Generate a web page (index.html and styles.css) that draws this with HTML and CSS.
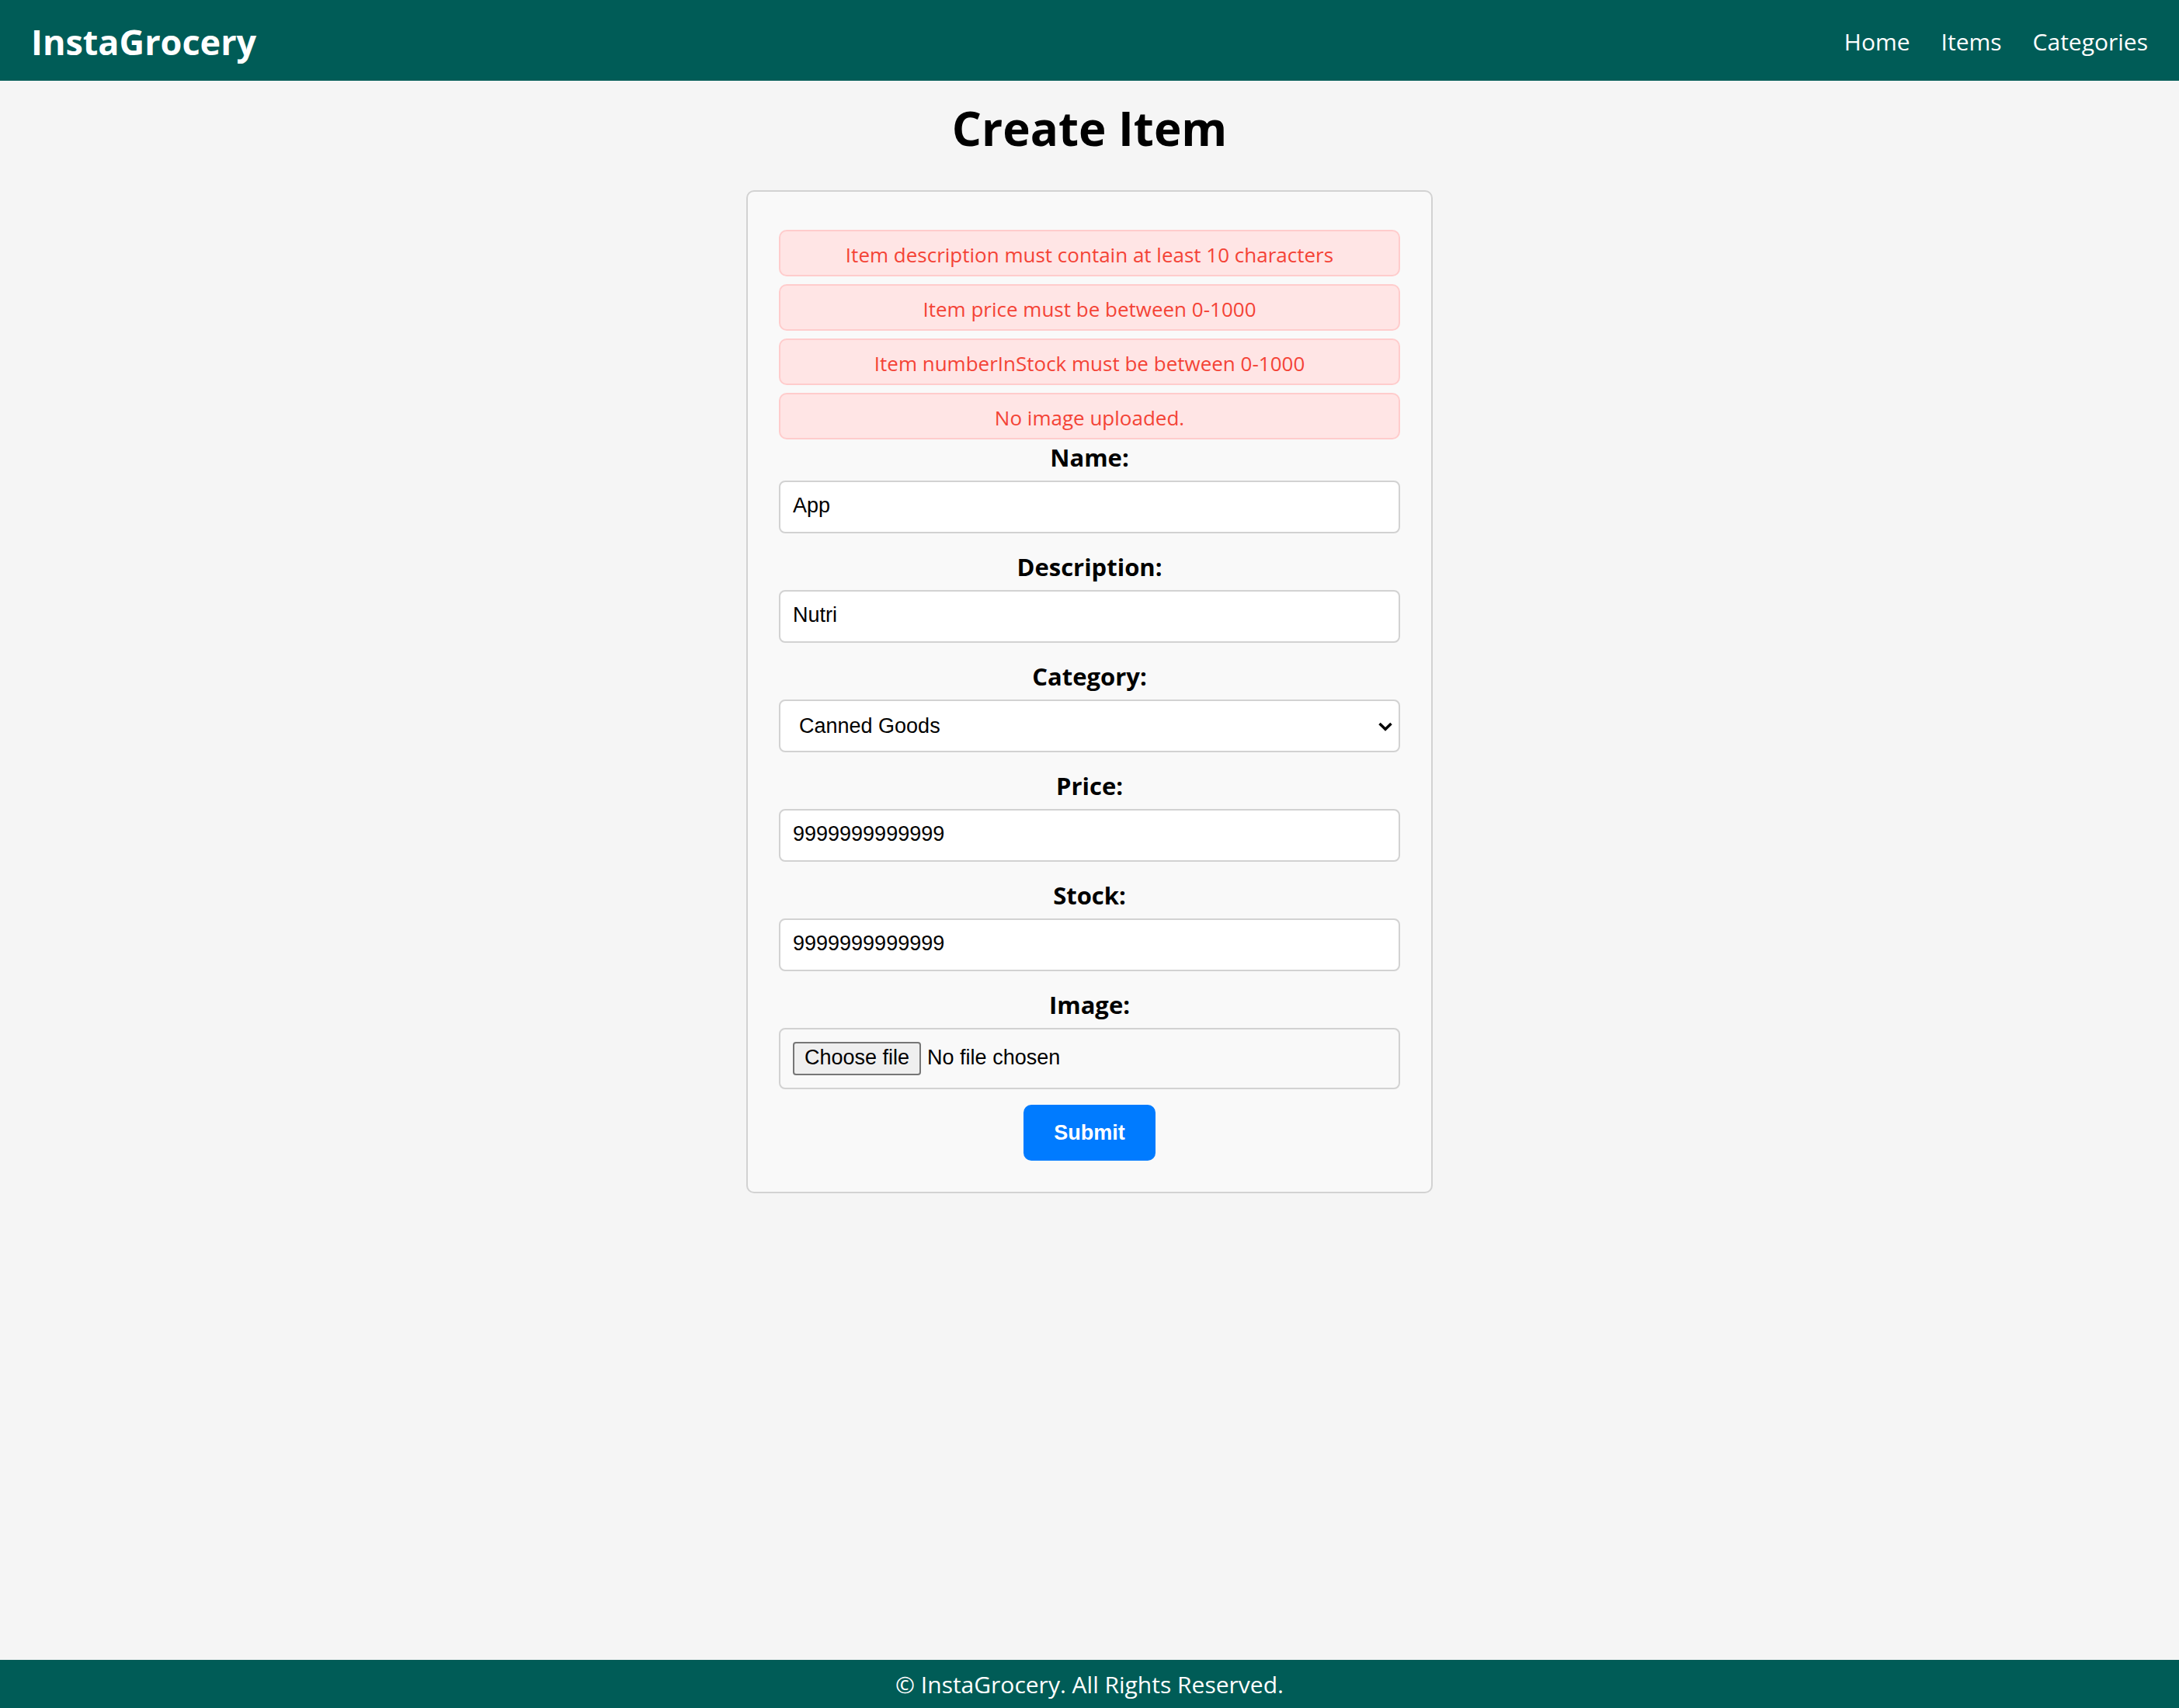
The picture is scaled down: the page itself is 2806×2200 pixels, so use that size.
FILE: index.html
```
<!DOCTYPE html>
<html lang="en">
<head>
  <meta charset="utf-8">
  <meta name="viewport" content="width=device-width, initial-scale=1">
  <title>InstaGrocery</title>
  <link rel="stylesheet" href="styles.css">
</head>
<body>
  <header class="site-header">
    <a class="logo" href="#">InstaGrocery</a>
    <nav class="site-nav">
      <a href="#">Home</a>
      <a href="#">Items</a>
      <a href="#">Categories</a>
    </nav>
  </header>

  <main class="content">
    <h1 class="title">Create Item</h1>
    <form class="card">
      <ul class="errors">
        <li class="error">Item description must contain at least 10 characters</li>
        <li class="error">Item price must be between 0-1000</li>
        <li class="error">Item numberInStock must be between 0-1000</li>
        <li class="error">No image uploaded.</li>
      </ul>

      <div class="field">
        <label class="label" for="name">Name:</label>
        <input class="control" type="text" id="name" name="name" value="App">
      </div>
      <div class="field">
        <label class="label" for="description">Description:</label>
        <input class="control" type="text" id="description" name="description" value="Nutri">
      </div>
      <div class="field">
        <label class="label" for="category">Category:</label>
        <div class="select-wrap">
          <select class="control select" id="category" name="category">
            <option>Canned Goods</option>
          </select>
          <svg class="chevron" viewBox="0 0 18 12" aria-hidden="true"><path d="M1.500 2 9 9.200 16.500 2"/></svg>
        </div>
      </div>
      <div class="field">
        <label class="label" for="price">Price:</label>
        <input class="control" type="text" inputmode="numeric" id="price" name="price" value="9999999999999">
      </div>
      <div class="field">
        <label class="label" for="stock">Stock:</label>
        <input class="control" type="text" inputmode="numeric" id="stock" name="stock" value="9999999999999">
      </div>
      <div class="field">
        <label class="label" for="image">Image:</label>
        <div class="control file">
          <span class="file-button">Choose file</span>
          <span>No file chosen</span>
          <input class="file-input" type="file" id="image" name="image">
        </div>
      </div>

      <button class="submit" type="submit">Submit</button>
    </form>
  </main>

  <footer class="site-footer">© InstaGrocery. All Rights Reserved.</footer>
</body>
</html>
```
FILE: styles.css
```
* {
  box-sizing: border-box;
}

body {
  margin: 0;
  min-height: 100vh;
  display: flex;
  flex-direction: column;
  background: #f5f5f5;
  color: #000;
  font-family: "Segoe UI", "Open Sans", sans-serif;
}

.site-header {
  display: flex;
  justify-content: space-between;
  align-items: center;
  padding: 23px 40px 19px;
  background: #005c57;
}

.logo,
.site-nav a {
  color: #fff;
  text-decoration: none;
}

.logo {
  font-size: 45px;
  font-weight: 700;
  line-height: 62px;
}

.site-nav {
  display: flex;
  gap: 40px;
  font-size: 30px;
  line-height: 44px;
}

.content {
  flex: 1;
  padding: 0 20px 40px;
}

.title {
  margin: 21px 0 40px;
  font-size: 60px;
  line-height: 80px;
  text-align: center;
}

.card {
  max-width: 884px;
  margin: 0 auto;
  padding: 40px;
  border: 2px solid #d2d2d2;
  border-radius: 10px;
  background: #f9f9f9;
  text-align: center;
}

.errors {
  display: grid;
  gap: 10px;
  margin: 0;
  padding: 9px 0 0;
  list-style: none;
}

.error {
  padding: 12px 20px 8px;
  border: 2px solid #ffcccc;
  border-radius: 10px;
  background: #ffe5e5;
  color: #f44336;
  font-size: 26px;
  line-height: 36px;
}

.field {
  margin-bottom: 20px;
}

.label {
  display: block;
  margin-bottom: 7px;
  font-size: 31px;
  font-weight: 700;
  line-height: 46px;
}

.control {
  display: block;
  width: 100%;
  height: 68px;
  padding: 15px 16px 18px;
  border: 2px solid #d2d2d2;
  border-radius: 8px;
  background: #fff;
  color: #000;
  font-family: Arial, "Liberation Sans", sans-serif;
  font-size: 27px;
  line-height: 31px;
}

.select-wrap {
  position: relative;
}

.select {
  padding: 16px 24px;
  appearance: none;
}

.chevron {
  position: absolute;
  top: 29px;
  right: 10px;
  width: 18px;
  height: 12px;
  fill: none;
  stroke: #000;
  stroke-width: 3.5;
}

.file {
  position: relative;
  display: flex;
  align-items: baseline;
  gap: 8px;
  height: auto;
  padding: 16px;
  background: none;
}

.file-button {
  padding: 3px 13px 5px;
  border: 2px solid #767676;
  border-radius: 4px;
  background: #efefef;
}

.file-input {
  position: absolute;
  inset: 0;
  width: 100%;
  opacity: 0;
}

.submit {
  display: block;
  height: 72px;
  margin: 0 auto;
  padding: 0 39px;
  border: 0;
  border-radius: 10px;
  background: #007bff;
  color: #fff;
  font-family: Arial, "Liberation Sans", sans-serif;
  font-size: 27px;
  font-weight: 700;
}

.site-footer {
  padding: 10px 20px 8px;
  background: #005c57;
  color: #fff;
  font-size: 30px;
  line-height: 44px;
  text-align: center;
}
```
